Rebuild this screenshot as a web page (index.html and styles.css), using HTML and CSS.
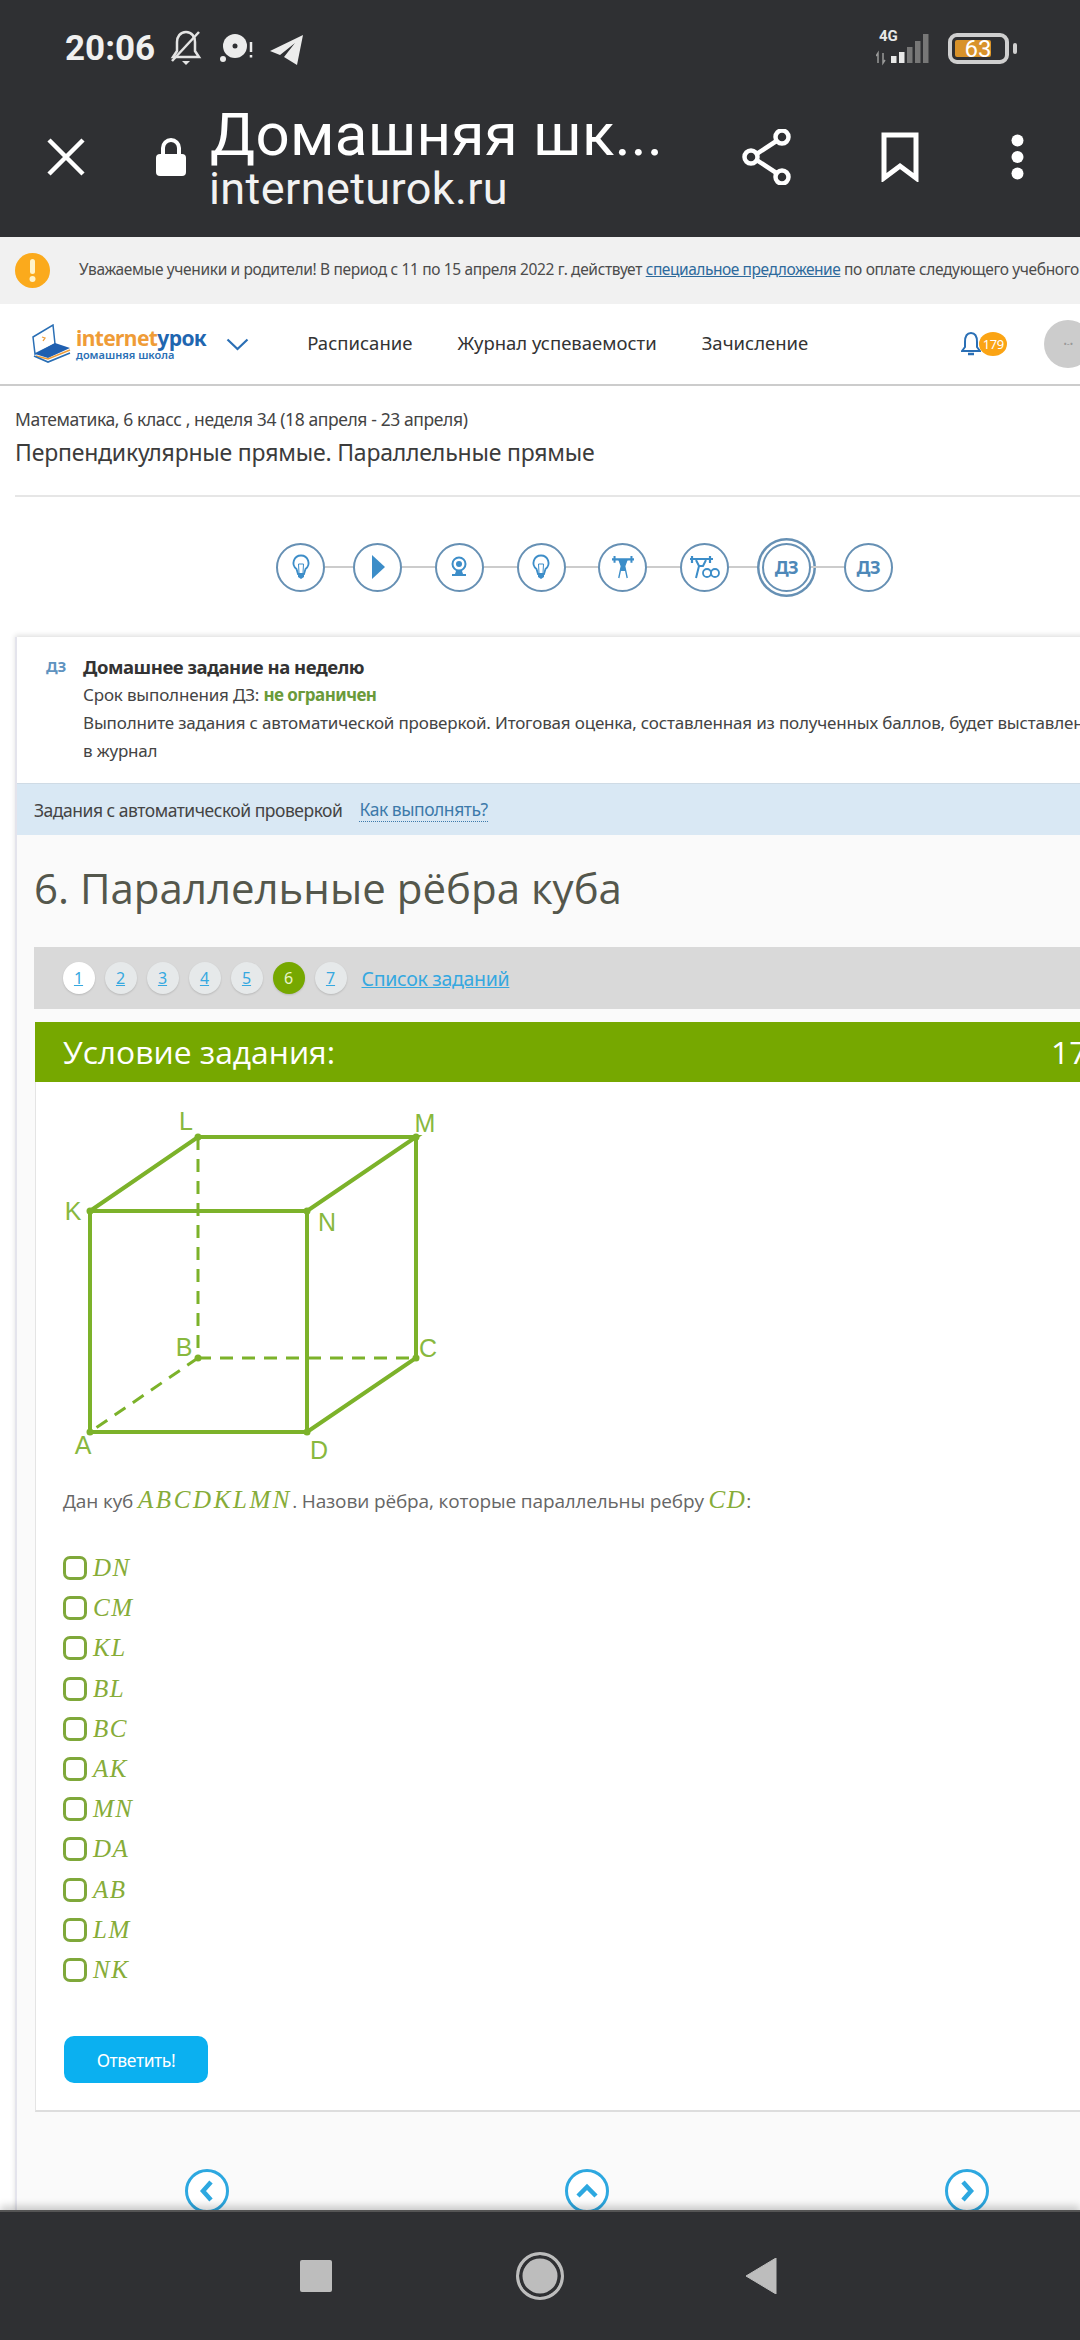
FILE: index.html
```html
<!DOCTYPE html>
<html lang="ru">
<head>
<meta charset="utf-8">
<title>Домашняя школа</title>
<link rel="stylesheet" href="styles.css">
</head>
<body>
<div class="screen">
  <header class="topbar">
    <div class="status">
      <span class="time">20:06</span>
      <svg class="st-bell" width="34" height="38" viewBox="0 0 34 38"><path d="M17 3c-6 0-9 5-9 10v9l-4 6h26l-4-6v-9c0-5-3-10-9-10z" fill="none" stroke="#e4e4e4" stroke-width="2.500"/><path d="M13 32h8l-4 4z" fill="#e4e4e4"/><path d="M30 3 3 32" stroke="#e4e4e4" stroke-width="2.500"/></svg>
      <svg class="st-rec" width="36" height="30" viewBox="0 0 36 30"><circle cx="17" cy="13" r="12" fill="#ececec"/><circle cx="17" cy="13" r="2.500" fill="#2f3033"/><circle cx="5" cy="26" r="3" fill="#ececec"/><path d="M33 9v10M33 22v2.500" stroke="#ececec" stroke-width="2.500"/></svg>
      <svg class="st-plane" width="36" height="34" viewBox="0 0 36 34"><path d="M34 4 1 20l10 4L26 12 15 26l13 8z" fill="#ececec"/></svg>
      <svg class="st-signal" width="56" height="36" viewBox="0 0 56 36"><text class="st-4g" x="3" y="11">4G</text><path d="M15 26h5.500v7H15zM23 22h5.500v11H23z" fill="#e8e8e8"/><path d="M31 17h5.500v16H31zM39 11h5.500v22H39zM47 4h5.500v29H47z" fill="#777"/><path d="M2 33v-10l-2 3M7 23v10l2-3" fill="none" stroke="#999" stroke-width="1.500"/></svg>
      <svg class="st-batt" width="70" height="31" viewBox="0 0 70 31"><rect x="2" y="2" width="57" height="27" rx="7" fill="none" stroke="#cfcfcf" stroke-width="4"/><rect x="7" y="7" width="36" height="17" rx="2" fill="#d8922a"/><rect x="65" y="10" width="4" height="11" rx="2" fill="#cfcfcf"/><text class="st-pct" x="30" y="24" text-anchor="middle">63</text></svg>
    </div>
    <div class="toolbar">
      <svg class="t-close" width="38" height="38" viewBox="0 0 38 38"><path d="M2 2l34 34M36 2 2 36" stroke="#fff" stroke-width="4.500"/></svg>
      <svg class="t-lock" width="30" height="38" viewBox="0 0 30 38"><path d="M7 18V10a8 8 0 0 1 16 0v8" fill="none" stroke="#fff" stroke-width="4"/><rect y="16" width="30" height="22" rx="4" fill="#fff"/></svg>
      <div class="t-titles">
        <div class="t-title">Домашняя шк...</div>
        <div class="t-url">interneturok.ru</div>
      </div>
      <svg class="t-share" width="50" height="56" viewBox="0 0 50 56"><path d="M39 9 10 28l29 19" fill="none" stroke="#fff" stroke-width="4.500"/><circle cx="40" cy="8" r="6.500" fill="#2f3033" stroke="#fff" stroke-width="4.500"/><circle cx="9" cy="28" r="6.500" fill="#2f3033" stroke="#fff" stroke-width="4.500"/><circle cx="40" cy="48" r="6.500" fill="#2f3033" stroke="#fff" stroke-width="4.500"/></svg>
      <svg class="t-mark" width="38" height="50" viewBox="0 0 38 50"><path d="M3 3h32v43L19 34 3 46z" fill="none" stroke="#fff" stroke-width="5"/></svg>
      <svg class="t-dots" width="13" height="46" viewBox="0 0 13 46"><circle cx="6.500" cy="6.500" r="6" fill="#fff"/><circle cx="6.500" cy="23" r="6" fill="#fff"/><circle cx="6.500" cy="39.500" r="6" fill="#fff"/></svg>
    </div>
  </header>

  <main class="main">
    <div class="notice">
      <svg class="notice-ic" width="35" height="35" viewBox="0 0 35 35"><circle cx="17.500" cy="17.500" r="17.500" fill="#fbaa1c"/><rect x="15" y="6" width="5" height="15" rx="2.500" fill="#fff3c9"/><circle cx="17.500" cy="26" r="3" fill="#fff3c9"/></svg>
      <p class="notice-text">Уважаемые ученики и родители! В период с 11 по 15 апреля 2022 г. действует <a class="notice-link">специальное предложение</a> по оплате следующего учебного</p>
    </div>

    <nav class="nav">
      <svg class="logo-ic" width="39" height="40" viewBox="0 0 39 40"><path d="M1 13 21 1l2 19L3 30z" fill="#fff" stroke="#2a6fb5" stroke-width="1.500"/><path d="M3 30 23 19l15 5-22 10z" fill="#1f5fb0"/><path d="M4 32l12 3 22-9" fill="none" stroke="#ef9c37" stroke-width="1.500"/><path d="M2 32l14 6 22-9" fill="none" stroke="#2a6fb5" stroke-width="1.800"/><path d="M10 13l3 1-2 3" fill="none" stroke="#ef9c37" stroke-width="1.300"/></svg>
      <div class="logo-text">
        <div class="logo-name"><span class="logo-o">internet</span><span class="logo-b">урок</span></div>
        <div class="logo-sub">домашняя школа</div>
      </div>
      <svg class="nav-chev" width="23" height="13" viewBox="0 0 23 13"><path d="M1.500 1.500 11.500 11l10-9.500" fill="none" stroke="#2a6fb5" stroke-width="2.200"/></svg>
      <a class="nav-item">Расписание</a>
      <a class="nav-item">Журнал успеваемости</a>
      <a class="nav-item">Зачисление</a>
      <div class="nav-bell">
        <svg width="20" height="26" viewBox="0 0 20 26"><path d="M10 2C5 2 4 7 4 11v5l-3 4h18l-3-4v-5c0-4-1-9-6-9z" fill="none" stroke="#2a6fb5" stroke-width="2"/><path d="M7 23h6" stroke="#2a6fb5" stroke-width="2.500"/></svg>
        <span class="nav-badge">179</span>
      </div>
      <div class="nav-avatar">•-•</div>
    </nav>

    <section class="crumbs">
      <div class="crumb-sub">Математика, 6 класс , неделя 34 (18 апреля - 23 апреля)</div>
      <h1 class="crumb-title">Перпендикулярные прямые. Параллельные прямые</h1>
    </section>

    <div class="steps">
      <span class="step"><svg width="24" height="26" viewBox="0 0 24 26"><path d="M12 1.500a7.500 7.500 0 0 0-4.500 13.500l1.500 5h6l1.500-5A7.500 7.500 0 0 0 12 1.500z" fill="none" stroke="#3c8dc8" stroke-width="1.800"/><path d="M10 19l-.5-9h5l-.5 9" fill="none" stroke="#3c8dc8"/><path d="M9 20h6v3l-3 2-3-2z" fill="#3c8dc8"/></svg></span>
      <i class="step-line step-line-short"></i>
      <span class="step"><svg width="24" height="26" viewBox="0 0 24 26"><path d="M6 1l13 12L6 25z" fill="#3c8dc8"/></svg></span>
      <i class="step-line"></i>
      <span class="step"><svg width="24" height="26" viewBox="0 0 24 26"><circle cx="12" cy="10" r="6.500" fill="none" stroke="#3c8dc8" stroke-width="2"/><circle cx="12" cy="10" r="3" fill="#3c8dc8"/><path d="M9 17h6l1 3h3v2H5v-2h3z" fill="#3c8dc8"/></svg></span>
      <i class="step-line"></i>
      <span class="step"><svg width="24" height="26" viewBox="0 0 24 26"><path d="M12 1.500a7.500 7.500 0 0 0-4.500 13.500l1.500 5h6l1.500-5A7.500 7.500 0 0 0 12 1.500z" fill="none" stroke="#3c8dc8" stroke-width="1.800"/><path d="M10 19l-.5-9h5l-.5 9" fill="none" stroke="#3c8dc8"/><path d="M9 20h6v3l-3 2-3-2z" fill="#3c8dc8"/></svg></span>
      <i class="step-line"></i>
      <span class="step"><svg width="22" height="26" viewBox="0 0 26 30"><path d="M3 2v8M23 2v8M0 6h26" stroke="#3c8dc8" stroke-width="2.400"/><circle cx="13" cy="8" r="2.500" fill="#3c8dc8"/><path d="M8 6l3 8h4l3-8M11 14l-3 14M15 14l3 14M11 14h4v5h-4z" fill="#3c8dc8" stroke="#3c8dc8" stroke-width="1.600"/></svg></span>
      <i class="step-line"></i>
      <span class="step"><svg width="30" height="26" viewBox="0 0 30 26"><path d="M2 2v7M20 2v7M-1 5h24" stroke="#3c8dc8" stroke-width="2.200"/><path d="M6 6l3 6h4l3-6M9 12l-3 12" fill="none" stroke="#3c8dc8" stroke-width="2"/><circle cx="17" cy="19" r="4" fill="none" stroke="#3c8dc8" stroke-width="1.800"/><circle cx="25" cy="19" r="4" fill="none" stroke="#3c8dc8" stroke-width="1.800"/></svg></span>
      <i class="step-line"></i>
      <span class="step step-on">ДЗ</span>
      <i class="step-line"></i>
      <span class="step">ДЗ</span>
    </div>

    <article class="card">
      <div class="hw">
        <span class="hw-tag">ДЗ</span>
        <div class="hw-body">
          <div class="hw-title">Домашнее задание на неделю</div>
          <div>Срок выполнения ДЗ: <b class="hw-ok">не ограничен</b></div>
          <div>Выполните задания с автоматической проверкой. Итоговая оценка, составленная из полученных баллов, будет выставлена</div>
          <div>в журнал</div>
        </div>
      </div>
      <div class="band"><span>Задания с автоматической проверкой</span><a class="band-link">Как выполнять?</a></div>
      <h2 class="task-name">6. Параллельные рёбра куба</h2>
      <div class="tabs">
        <a class="tab tab-first">1</a><a class="tab">2</a><a class="tab">3</a><a class="tab">4</a><a class="tab">5</a><a class="tab tab-on">6</a><a class="tab">7</a>
        <a class="tabs-link">Список заданий</a>
      </div>
      <div class="cond-head"><span>Условие задания:</span><span class="cond-pts">17</span></div>
      <div class="cond">
        <svg class="cube" width="400" height="375" viewBox="60 1095 400 375">
          <g class="cube-solid">
            <path d="M90 1211H307V1432H90zM90 1211 198 1137H416L307 1211M416 1137V1358L307 1432"/>
          </g>
          <g class="cube-dash">
            <path d="M198 1137V1358M198 1358H416M198 1358 90 1432"/>
          </g>
          <g class="cube-dots">
            <circle cx="90" cy="1211" r="3.500"/><circle cx="198" cy="1137" r="3.500"/><circle cx="416" cy="1137" r="3.500"/><circle cx="307" cy="1211" r="3.500"/><circle cx="90" cy="1432" r="3.500"/><circle cx="307" cy="1432" r="3.500"/><circle cx="416" cy="1358" r="3.500"/><circle cx="198" cy="1358" r="3.500"/>
          </g>
          <g class="cube-labels">
            <text x="186" y="1130" text-anchor="middle">L</text><text x="425" y="1132" text-anchor="middle">M</text><text x="73" y="1220" text-anchor="middle">K</text><text x="327" y="1231" text-anchor="middle">N</text><text x="184" y="1356" text-anchor="middle">B</text><text x="428" y="1357" text-anchor="middle">C</text><text x="83" y="1454" text-anchor="middle">A</text><text x="319" y="1459" text-anchor="middle">D</text>
          </g>
        </svg>
        <p class="cond-text">Дан куб <span class="math math-long">ABCDKLMN</span>. Назови рёбра, которые параллельны ребру <span class="math">CD</span>:</p>
        <ul class="opts">
          <li class="opt"><i class="box"></i><span class="math">DN</span></li>
          <li class="opt"><i class="box"></i><span class="math">CM</span></li>
          <li class="opt"><i class="box"></i><span class="math">KL</span></li>
          <li class="opt"><i class="box"></i><span class="math">BL</span></li>
          <li class="opt"><i class="box"></i><span class="math">BC</span></li>
          <li class="opt"><i class="box"></i><span class="math">AK</span></li>
          <li class="opt"><i class="box"></i><span class="math">MN</span></li>
          <li class="opt"><i class="box"></i><span class="math">DA</span></li>
          <li class="opt"><i class="box"></i><span class="math">AB</span></li>
          <li class="opt"><i class="box"></i><span class="math">LM</span></li>
          <li class="opt"><i class="box"></i><span class="math">NK</span></li>
        </ul>
        <button class="answer">Ответить!</button>
      </div>
      <div class="pager">
        <span class="pg"><svg width="18" height="24" viewBox="0 0 18 24"><path d="M13 3 5 12l8 9" fill="none" stroke="#2da8e0" stroke-width="4.500"/></svg></span>
        <span class="pg"><svg width="24" height="18" viewBox="0 0 24 18"><path d="M3 14l9-9 9 9" fill="none" stroke="#2da8e0" stroke-width="4.500"/></svg></span>
        <span class="pg"><svg width="18" height="24" viewBox="0 0 18 24"><path d="M5 3l8 9-8 9" fill="none" stroke="#2da8e0" stroke-width="4.500"/></svg></span>
      </div>
    </article>
  </main>

  <footer class="sysbar">
    <i class="sys-square"></i>
    <i class="sys-home"></i>
    <svg class="sys-back" width="32" height="36" viewBox="0 0 32 36"><path d="M31 0v36L1 18z" fill="#bdbdbd" stroke="#bdbdbd" stroke-linejoin="round"/></svg>
  </footer>
</div>
</body>
</html>
```
FILE: styles.css
```css
* { box-sizing: border-box; }
html, body { margin: 0; padding: 0; }
body { width: 1080px; height: 2340px; overflow: hidden; background: #fff; font-family: "Noto Sans", sans-serif; }
p, h1, h2, ul { margin: 0; padding: 0; font-weight: normal; }
svg { display: block; flex: none; }
.screen { width: 1080px; height: 2340px; display: flex; flex-direction: column; overflow: hidden; }

/* top */
.topbar { height: 237px; flex: none; background: #2f3033; color: #fff; }
.status { height: 96px; display: flex; align-items: center; padding: 0 62px 0 65px; }
.time { font: 700 35px/1 Roboto, sans-serif; color: #f0f0f0; width: 88px; }
.st-bell { margin-left: 16px; }
.st-rec { margin-left: 15px; }
.st-plane { margin-left: 15px; }
.st-signal { margin-left: auto; }
.st-batt { margin-left: 16px; }
.st-4g { font: 700 15px Roboto, sans-serif; fill: #e8e8e8; }
.st-pct { font: 400 24px Roboto, sans-serif; fill: #fff; }
.toolbar { height: 141px; display: flex; align-items: center; padding: 0 0 20px 47px; }
.t-lock { margin-left: 71px; }
.t-titles { width: 532px; margin-left: 24px; white-space: nowrap; padding-top: 4px; }
.t-title { font: 400 60px/60px Roboto, sans-serif; letter-spacing: .3px; }
.t-url { font: 400 45px/48px Roboto, sans-serif; letter-spacing: .4px; color: #f2f2f2; margin-left: -1px; }
.t-mark { margin-left: 89px; }
.t-dots { margin-left: 92px; }

.main { flex: 1; min-height: 0; overflow: hidden; background: #fff; }

/* notice */
.notice { height: 67px; background: #f1f1f1; display: flex; align-items: center; padding-left: 15px; white-space: nowrap; }
.notice-text { margin-left: 29px; padding-bottom: 3px; font-size: 15.500px; letter-spacing: -.35px; color: #4c4c4c; }
.notice-link { color: #2e6a9c; text-decoration: underline; letter-spacing: -.44px; }

/* nav */
.nav { height: 82px; border-bottom: 2px solid #ccc; display: flex; align-items: center; padding-left: 32px; white-space: nowrap; }
.logo-text { margin-left: 5px; }
.logo-name { font: 700 21px/22px "Noto Sans", sans-serif; letter-spacing: -.62px; }
.logo-o { color: #ef9c37; }
.logo-b { color: #1f66b0; }
.logo-sub { font-size: 11px; font-weight: 600; line-height: 12px; color: #2a6fb5; }
.nav-chev { margin-left: 20px; }
.nav-item { font-size: 18.500px; padding-bottom: 3px; color: #333; margin-left: 45px; }
.nav-chev + .nav-item { margin-left: 58px; }
.nav-bell { position: relative; margin-left: 153px; width: 46px; height: 26px; }
.nav-badge { position: absolute; left: 18px; top: 1px; width: 28px; height: 24px; border-radius: 50%; background: #fba414; color: #fff; font-size: 13px; line-height: 24px; text-align: center; letter-spacing: -.5px; }
.nav-avatar { margin-left: 63px; flex: none; width: 48px; height: 48px; border-radius: 50%; background: #ccc; color: #999; font-size: 9px; line-height: 48px; text-align: center; }

/* crumbs */
.crumbs { height: 111px; margin-left: 15px; padding-top: 21px; border-bottom: 2px solid #e6e6e6; white-space: nowrap; }
.crumb-sub { font-size: 17.500px; line-height: 24px; letter-spacing: -.39px; color: #444; }
.crumb-title { font-size: 23px; line-height: 36px; margin-top: 3px; letter-spacing: -.2px; color: #3c3c3c; }

/* steps */
.steps { height: 140px; display: flex; align-items: center; padding-left: 276px; }
.step { width: 49px; height: 49px; flex: none; border: 2.500px solid #6690b4; border-radius: 50%; display: flex; align-items: center; justify-content: center; color: #4e88b8; font-size: 18px; font-weight: 700; letter-spacing: -.5px; background: #fff; }
.step-on { box-shadow: 0 0 0 2.500px #fff, 0 0 0 5px #6690b4; }
.step-line { width: 32.800px; height: 2.500px; flex: none; background: #ccc; }
.step-line-short { width: 28px; }

/* card */
.card { width: 1120px; margin-left: 15px; background: #fafafa; border-left: 2px solid #e4e4ec; box-shadow: 0 -2px 5px rgba(0,0,0,.12); white-space: nowrap; }
.hw { height: 147px; background: #fff; display: flex; padding: 16px 0 0 29px; border-bottom: 1px solid #cfdbe5; font-size: 17px; letter-spacing: -.17px; color: #444; line-height: 28px; }
.hw-tag { width: 37px; font-size: 15px; font-weight: 700; color: #5f93c0; line-height: 26px; }
.hw-title { font-weight: 700; font-size: 18.500px; letter-spacing: -.45px; color: #333; }
.hw-ok { color: #6a9a3a; letter-spacing: -.55px; }
.band { height: 51px; background: #d9e8f4; display: flex; align-items: center; padding-left: 17px; font-size: 17.500px; letter-spacing: -.48px; color: #444; }
.band-link { margin-left: 17px; color: #3d7aaa; border-bottom: 1px dotted #3d7aaa; }
.task-name { height: 112px; padding: 0 0 7px 17px; display: flex; align-items: center; font: 400 42px/1 "Open Sans", sans-serif; color: #54574c; }
.tabs { height: 62px; margin-left: 17px; background: #d9d9d9; display: flex; align-items: center; gap: 10px; padding-left: 28.500px; }
.tab { width: 32px; height: 32px; border-radius: 50%; background: #e6e9ea; box-shadow: 0 1px 2px rgba(0,0,0,.15); color: #35a8e0; font-size: 16px; line-height: 32px; text-align: center; text-decoration: underline; }
.tab-first { background: #fff; }
.tab-on { background: #76a800; color: #e8f5c8; text-decoration: none; }
.tabs-link { margin-left: 5px; font-size: 19.500px; letter-spacing: -.3px; color: #35a8e0; text-decoration: underline; }
.cond-head { height: 60px; margin: 13px 0 0 18px; background: #76a800; color: #fff; display: flex; align-items: center; padding-left: 28px; font: 400 31.800px/1 "Open Sans", sans-serif; }
.cond-pts { margin-left: 716px; }
.cond { margin-left: 18px; background: #fff; border-left: 1px solid #e4e4e4; border-bottom: 2px solid #ddd; padding: 13px 0 27px 27px; }
.cube { margin-left: -3px; }
.cube-solid path { fill: none; stroke: #7cb22a; stroke-width: 4; }
.cube-dash path { fill: none; stroke: #7cb22a; stroke-width: 3; stroke-dasharray: 13 9; }
.cube-dots circle { fill: #7cb22a; }
.cube-labels text { font: 400 25px "Liberation Sans", sans-serif; fill: #88b83e; }
.cond-text { height: 30px; margin-top: 15px; font: 400 19px/30px "Open Sans", sans-serif; letter-spacing: -.14px; color: #666; }
.math { font: italic 400 25px/30px "Liberation Serif", serif; color: #86ac38; letter-spacing: 1.500px; }
.math-long { letter-spacing: 2.600px; }
.opts { list-style: none; margin-top: 33px; }
.opt { height: 40.200px; display: flex; align-items: center; }
.box { width: 24px; height: 24px; border: 3px solid #7fa83a; border-radius: 7px; flex: none; margin-right: 6px; }
.answer { display: block; width: 144px; height: 47px; margin: 46px 0 0 1px; border: 0; border-radius: 10px; background: #0bb0f0; color: #fff; font: 400 17.500px "Noto Sans", sans-serif; letter-spacing: -.4px; padding: 0; }
.pager { display: flex; gap: 336px; padding: 57px 0 0 168px; }
.pg { width: 44px; height: 44px; flex: none; border: 3px solid #2da8e0; border-radius: 50%; background: #fff; display: flex; align-items: center; justify-content: center; }

/* system bar */
.sysbar { height: 130px; flex: none; background: #2f3033; border-top: 2px solid #555; box-shadow: 0 -4px 8px rgba(0,0,0,.2); position: relative; display: flex; align-items: center; padding-left: 300px; }
.sys-square { width: 32px; height: 32px; background: #bdbdbd; border-radius: 2px; margin-right: 184px; flex: none; }
.sys-home { width: 48px; height: 48px; border-radius: 50%; background: #bdbdbd; border: 3.500px solid #bdbdbd; box-shadow: inset 0 0 0 3.500px #2f3033; margin-right: 181px; flex: none; }
```
